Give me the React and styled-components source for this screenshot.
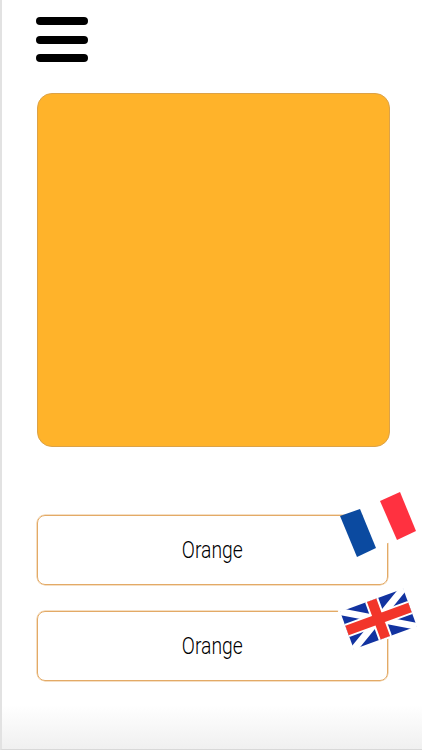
import React from "react";
import styled, { createGlobalStyle } from "styled-components";

const Global = createGlobalStyle`
  html, body { margin: 0; padding: 0; background: #fff; }
  body { font-family: "Liberation Sans", Arial, sans-serif; }
`;

const Screen = styled.div`
  width: 422px;
  height: 750px;
  box-sizing: border-box;
  padding: 17px 32px 0 35px;
  border-left: 2px solid #e2e2e2;
  border-bottom: 1px solid #d8d8d8;
  background: linear-gradient(to bottom, #fff 0, #fff 705px, #f0f0f0 749px);
  overflow: hidden;
`;

const MenuButton = styled.div`
  width: 52px;
  display: flex;
  flex-direction: column;
  gap: 10.5px;
  margin: 0 0 31px -1px;
`;

const MenuBar = styled.span`
  display: block;
  height: 8px;
  border-radius: 4px;
  background: #000;
`;

const ColorCard = styled.div`
  width: 353px;
  height: 354px;
  box-sizing: border-box;
  background: #ffb32a;
  border: 1px solid #dca247;
  border-radius: 15px;
  margin-bottom: 68px;
`;

const Answers = styled.div`
  display: flex;
  flex-direction: column;
  gap: 26px;
  width: 350.5px;
`;

const AnswerBox = styled.div`
  position: relative;
  height: 70px;
  box-sizing: border-box;
  border: 1px solid #e3aa66;
  box-shadow: 0 0 0 0.5px #ecc08a;
  border-radius: 8px;
  display: flex;
  align-items: center;
  justify-content: center;
  font-family: "Roboto", sans-serif;
  font-weight: 300;
  font-size: 23px;
  color: #000;
`;

const Word = styled.span`
  display: inline-block;
  transform: scaleX(0.84);
`;

const Flag = styled.svg`
  position: absolute;
  left: ${(p) => p.$left}px;
  top: ${(p) => p.$top}px;
`;

const FrenchFlag = () => (
  <Flag $left={297} $top={-29} width="85" height="74" viewBox="0 0 85 74">
    <polygon points="25,22 45,14 62,53 41,60" fill="#fff" />
    <polygon points="5,29 25,22 41,61 22,70" fill="#0b4aa0" />
    <polygon points="45,14 65,5 81,44 62,53" fill="#ff3140" />
  </Flag>
);

const BritishFlag = () => (
  <Flag $left={297} $top={-32} width="85" height="78" viewBox="0 0 85 78">
    <g transform="rotate(-20 43.5 39)">
      <rect x="8" y="17" width="71" height="44" fill="#fff" />
      <rect x="10" y="19" width="67" height="40" fill="#1233a0" />
      <path d="M10 19 L77 59 M77 19 L10 59" stroke="#fff" strokeWidth="7" />
      <path d="M43.5 19 V59 M10 39 H77" stroke="#fff" strokeWidth="14" />
      <path d="M43.5 19 V59 M10 39 H77" stroke="#f2352a" strokeWidth="10" />
    </g>
  </Flag>
);

export default function App() {
  return (
    <Screen>
      <Global />
      <MenuButton>
        <MenuBar />
        <MenuBar />
        <MenuBar />
      </MenuButton>
      <ColorCard />
      <Answers>
        <AnswerBox>
          <Word>Orange</Word>
          <FrenchFlag />
        </AnswerBox>
        <AnswerBox>
          <Word>Orange</Word>
          <BritishFlag />
        </AnswerBox>
      </Answers>
    </Screen>
  );
}
